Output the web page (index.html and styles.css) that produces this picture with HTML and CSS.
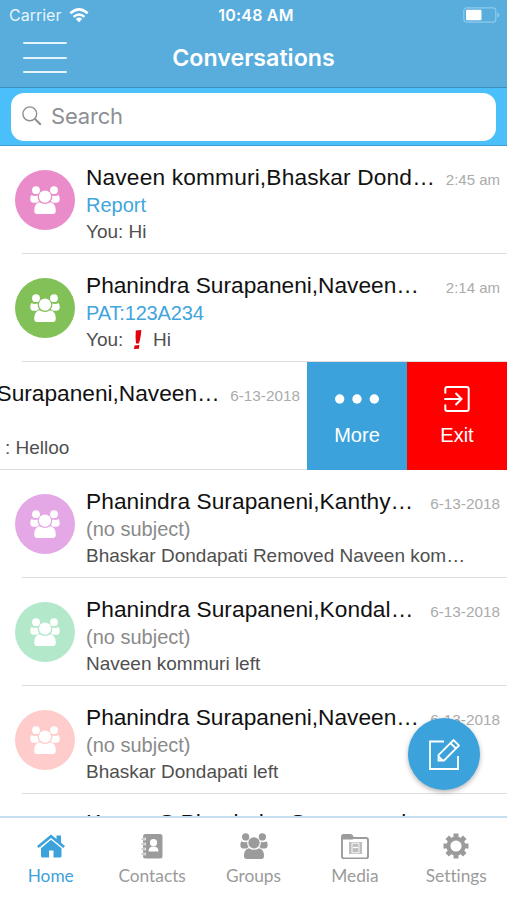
FILE: index.html
```html
<!DOCTYPE html>
<html lang="en">
<head>
    <meta charset="UTF-8">
    <meta name="viewport" content="width=device-width, initial-scale=1.0">
    <title>Conversations</title>
    <link rel="stylesheet" href="styles.css">
</head>
<body>

    <!-- Shared icon -->
    <svg class="sprite" aria-hidden="true">
        <symbol id="icon-group" viewBox="0 0 30 28">
            <circle cx="6" cy="4.200" r="3.900"/>
            <circle cx="24" cy="4.200" r="3.900"/>
            <path d="M1.500 9Q4 10.600 7.600 9.500Q7.400 13 9.200 15L7 16.800H3.500Q.300 16.800.300 13Q.300 10 1.500 9Z"/>
            <path d="M28.500 9Q26 10.600 22.400 9.500Q22.600 13 20.800 15L23 16.800H26.500Q29.700 16.800 29.700 13Q29.700 10 28.500 9Z"/>
            <circle cx="15" cy="10.600" r="6.100"/>
            <path d="M9.500 16.300Q15 19.700 20.500 16.300Q25.800 17.500 25.800 24.500Q25.800 28 22.800 28H7.200Q4.200 28 4.200 24.500Q4.200 17.500 9.500 16.300Z"/>
        </symbol>
    </svg>

    <div class="app">
        <!-- Header -->
        <header class="header">
            <div class="status-bar">
                <div class="carrier">
                    <span>Carrier</span>
                    <svg width="20" height="15" viewBox="0 0 20 15">
                        <g fill="none" stroke="#fff" stroke-width="2.500">
                            <path d="M1.300 5.300Q10-2.500 18.700 5.300"/>
                            <path d="M4.600 8.900Q10 4 15.400 8.900"/>
                        </g>
                        <path d="M6.800 10.900Q10 8.200 13.200 10.900L10 14.200Z" fill="#fff"/>
                    </svg>
                </div>
                <span class="clock">10:48 AM</span>
                <svg class="battery" width="37" height="16" viewBox="0 0 37 16">
                    <rect x=".8" y=".8" width="32" height="14.400" rx="3" fill="none" stroke="#8bcbed" stroke-width="1.200"/>
                    <rect x="3" y="2.800" width="15.500" height="10.400" rx="1" fill="#fff"/>
                    <path d="M34.300 5.300Q36.500 6 36.500 8T34.300 10.700Z" fill="#8bcbed"/>
                </svg>
            </div>
            <div class="nav-bar">
                <div class="menu-btn"><span></span><span></span><span></span></div>
                <h1>Conversations</h1>
            </div>
        </header>

        <!-- Search -->
        <div class="search-bar">
            <div class="search-field">
                <svg width="20" height="20" viewBox="0 0 20 20" fill="none" stroke="#8e8e93">
                    <circle cx="7.800" cy="7.800" r="6.900" stroke-width="1.400"/>
                    <path d="M12.800 12.800L18.800 18.800" stroke-width="2"/>
                </svg>
                <span>Search</span>
            </div>
        </div>

        <!-- Conversation list -->
        <main class="list">
            <div class="row">
                <div class="avatar pink"><svg><use href="#icon-group"/></svg></div>
                <div class="content">
                    <div class="top"><span class="name wide">Naveen kommuri,Bhaskar Dond…</span><span class="time">2:45 am</span></div>
                    <div class="subject link">Report</div>
                    <div class="preview">You: Hi</div>
                </div>
            </div>
            <div class="row">
                <div class="avatar green"><svg><use href="#icon-group"/></svg></div>
                <div class="content">
                    <div class="top"><span class="name">Phanindra Surapaneni,Naveen…</span><span class="time">2:14 am</span></div>
                    <div class="subject link pat">PAT:123A234</div>
                    <div class="preview">You: <svg class="alert" width="10" height="19" viewBox="0 0 10 19" fill="#e3000b"><path d="M2.800.5L8.300 0Q7.800 8.500 5.800 13.500H3Q2.200 7 2.800.500Z"/><path d="M1.500 15.500L6.300 15.100L6 18.700L1 19Z"/></svg> Hi</div>
                </div>
            </div>
            <div class="swipe">
                <div class="row swiped">
                    <div class="content">
                        <div class="top"><span class="name">Surapaneni,Naveen…</span><span class="time date">6-13-2018</span></div>
                        <div class="subject"></div>
                        <div class="preview sender">: Helloo</div>
                    </div>
                </div>
                <div class="action more">
                    <svg width="46" height="28" viewBox="0 0 46 28" fill="#fff">
                        <circle cx="5.700" cy="14" r="4.700"/>
                        <circle cx="23" cy="14" r="4.700"/>
                        <circle cx="40.300" cy="14" r="4.700"/>
                    </svg>
                    <span>More</span>
                </div>
                <div class="action exit">
                    <svg width="28" height="28" viewBox="0 0 28 28" fill="none" stroke="#fff" stroke-width="2">
                        <path d="M2.300 8.500V4Q2.300 2 4.300 2H23.700Q25.700 2 25.700 4V24Q25.700 26 23.700 26H4.300Q2.300 26 2.300 24V19.500"/>
                        <path d="M1.300 14H18.500M12.500 8L18.500 14L12.500 20"/>
                    </svg>
                    <span>Exit</span>
                </div>
            </div>
            <div class="row">
                <div class="avatar violet"><svg><use href="#icon-group"/></svg></div>
                <div class="content">
                    <div class="top"><span class="name kan">Phanindra Surapaneni,Kanthy…</span><span class="time date">6-13-2018</span></div>
                    <div class="subject">(no subject)</div>
                    <div class="preview">Bhaskar Dondapati Removed Naveen kom…</div>
                </div>
            </div>
            <div class="row">
                <div class="avatar mint"><svg><use href="#icon-group"/></svg></div>
                <div class="content">
                    <div class="top"><span class="name kan">Phanindra Surapaneni,Kondal…</span><span class="time date">6-13-2018</span></div>
                    <div class="subject">(no subject)</div>
                    <div class="preview">Naveen kommuri left</div>
                </div>
            </div>
            <div class="row">
                <div class="avatar rose"><svg><use href="#icon-group"/></svg></div>
                <div class="content">
                    <div class="top"><span class="name">Phanindra Surapaneni,Naveen…</span><span class="time date">6-13-2018</span></div>
                    <div class="subject">(no subject)</div>
                    <div class="preview">Bhaskar Dondapati left</div>
                </div>
            </div>
            <div class="row last">
                <div class="content">
                    <div class="top"><span class="name">Kumar S,Phanindra Surapaneni</span></div>
                </div>
            </div>
        </main>

        <!-- New message button -->
        <div class="compose">
            <svg width="32" height="32" viewBox="0 0 32 32" fill="none" stroke="#fff" stroke-width="1.800">
                <path d="M16 3.500H2V31H30V18"/>
                <path d="M10.500 22.500V17L25.500 2L31 7.500L16 22.500Z"/>
                <path d="M22.500 5L28 10.500M10.500 18.500L14.500 22.500"/>
            </svg>
        </div>

        <!-- Tab bar -->
        <nav class="tab-bar">
            <div class="tab active">
                <svg width="28" height="26" viewBox="0 0 28 26" fill="currentColor">
                    <path d="M0 13L14 1.500L19.500 6V2.500H24V9.800L28 13L26.300 15L14 5L1.700 15Z"/>
                    <path d="M14 6.800L24.500 15.300V23Q24.500 24.500 23 24.500H16.500V17.500H12V24.500H5.500Q4 24.500 4 23V15.300Z"/>
                </svg>
                <span>Home</span>
            </div>
            <div class="tab">
                <svg width="22" height="26" viewBox="0 0 22 26">
                    <rect x="2" y="1" width="19.500" height="24.500" rx="2.500" fill="currentColor"/>
                    <g fill="none" stroke="#fff" stroke-width="2.600"><path d="M0 6H5M0 11H5M0 16H5M0 21H5"/></g>
                    <g fill="none" stroke="currentColor" stroke-width="1.200"><path d="M.500 6H4.500M.500 11H4.500M.500 16H4.500M.500 21H4.500"/></g>
                    <circle cx="12.500" cy="9.700" r="3.600" fill="#fff"/>
                    <path d="M7.500 18.500Q7.500 13.500 12.500 13.500T17.500 18.500Z" fill="#fff"/>
                </svg>
                <span>Contacts</span>
            </div>
            <div class="tab">
                <svg width="28" height="26" fill="currentColor"><use href="#icon-group"/></svg>
                <span>Groups</span>
            </div>
            <div class="tab">
                <svg width="30" height="26" viewBox="0 0 30 26">
                    <path d="M2 7V3.500Q2 2 3.500 2H10.500Q12 2 13 5H26Q28 5 28 7V23.500Q28 25.500 26 25.500H4Q2 25.500 2 23.500Z" fill="none" stroke="currentColor" stroke-width="1.900"/>
                    <path d="M2 6.500V3H11.500L13 6.500Z" fill="currentColor"/>
                    <rect x="9" y="9" width="13" height="12" fill="currentColor" opacity=".65"/>
                    <rect x="12" y="10.200" width="7" height="9.600" fill="none" stroke="#fff" stroke-width=".9"/>
                    <path d="M13 14.500H18" stroke="#fff" stroke-width="1.200"/>
                </svg>
                <span>Media</span>
            </div>
            <div class="tab">
                <svg width="26" height="26" viewBox="-13 -13 26 26" fill="none" stroke="currentColor">
                    <circle r="7.600" stroke-width="4"/>
                    <g stroke-width="5" stroke-linecap="butt">
                        <path d="M0-8V-12.500M0 8V12.500M-8 0H-12.500M8 0H12.500"/>
                        <path d="M-6-6L-8.800-8.800M6-6L8.800-8.800M-6 6L-8.800 8.800M6 6L8.800 8.800"/>
                    </g>
                </svg>
                <span>Settings</span>
            </div>
        </nav>
    </div>
</body>
</html>
```
FILE: styles.css
```css
* {
    box-sizing: border-box;
}

body {
    font-family: "Liberation Sans", Arial, sans-serif;
    background: #fff;
    margin: 0;
}

.sprite {
    display: none;
}

svg {
    display: block;
    flex-shrink: 0;
}

.app {
    position: relative;
    display: flex;
    flex-direction: column;
    width: 507px;
    height: 900px;
    overflow: hidden;
}

/* Header */
.header {
    height: 88px;
    background: #58addd;
    border-bottom: 1px solid #3c8fbe;
    color: #fff;
    font-family: Inter, sans-serif;
}

.status-bar {
    display: grid;
    grid-template-columns: 1fr auto 1fr;
    align-items: center;
    height: 30px;
    padding: 0 7px 0 9px;
    font-size: 16px;
}

.carrier {
    display: flex;
    align-items: center;
    gap: 8px;
    color: #e6f4fc;
}

.clock {
    padding-left: 3px;
    font-weight: 600;
    letter-spacing: 0.200px;
}

.battery {
    justify-self: end;
}

.nav-bar {
    display: grid;
    grid-template-columns: 44px 1fr 44px;
    align-items: center;
    height: 55px;
    padding: 0 23px;
}

.menu-btn {
    display: flex;
    flex-direction: column;
    gap: 12.500px;
}

.menu-btn span {
    height: 2px;
    border-radius: 1px;
    background: #e3f4fd;
}

h1 {
    margin: 0;
    font-size: 23.200px;
    font-weight: 600;
    text-align: center;
}

/* Search */
.search-bar {
    height: 58px;
    padding: 5px 11px;
    background: #4abffa;
    border-bottom: 1px solid #3f9fd2;
}

.search-field {
    display: flex;
    align-items: center;
    gap: 9px;
    height: 48px;
    padding: 0 11px 2px;
    border-radius: 13px;
    background: #fff;
    color: #8e8e93;
    font-family: Inter, sans-serif;
    font-size: 22px;
    letter-spacing: -0.200px;
}

/* Conversations */
.list {
    height: 670px;
    overflow: hidden;
}

.row {
    display: flex;
    height: 108px;
    padding: 17px 7px 0 15px;
    gap: 11px;
    background: linear-gradient(#dedede, #dedede) 22px 100% / 100% 1.500px no-repeat;
}

.avatar {
    display: flex;
    align-items: center;
    justify-content: center;
    flex-shrink: 0;
    width: 60px;
    height: 60px;
    margin-top: 7px;
    border-radius: 50%;
    fill: #fff;
}

.avatar svg {
    width: 30px;
    height: 28px;
}

.pink { background: #ea8cc9; }
.green { background: #82c157; }
.violet { background: #e4a8e6; }
.mint { background: #b3e8cb; }
.rose { background: #ffcccc; }

.content {
    flex: 1;
    min-width: 0;
    white-space: nowrap;
}

.top {
    display: flex;
    align-items: baseline;
    justify-content: space-between;
    height: 29px;
    line-height: 28px;
}

.name {
    font-size: 22.700px;
    color: #111;
}

.wide {
    letter-spacing: 0.170px;
}

.kan {
    letter-spacing: 0.070px;
}

.time {
    font-size: 15px;
    color: #ababab;
}

.date {
    font-size: 15.300px;
}

.subject {
    height: 27px;
    line-height: 26px;
    font-size: 20px;
    color: #8a8a8a;
}

.link {
    color: #3fa5dc;
}

.pat {
    letter-spacing: -0.150px;
}

.preview {
    height: 26px;
    line-height: 26px;
    font-size: 19px;
    color: #4f4f4f;
}

.alert {
    display: inline-block;
    margin: 0 5px 0 4px;
    vertical-align: -3px;
}

.swipe {
    display: flex;
}

.swiped {
    flex: none;
    width: 307px;
    padding-left: 0;
    background-position: 0 100%;
}

.swiped .name {
    margin-left: -3.500px;
}

.sender {
    padding-left: 5px;
}

.action {
    display: flex;
    flex-direction: column;
    align-items: center;
    gap: 9px;
    width: 100px;
    height: 108px;
    padding-top: 23px;
    color: #fff;
    font-size: 20px;
    line-height: 26px;
}

.more {
    background: #3ba2db;
}

.exit {
    background: #fe0000;
}

.last {
    padding: 14px 0 0 86px;
}

.compose {
    position: absolute;
    right: 27px;
    bottom: 110px;
    display: flex;
    align-items: center;
    justify-content: center;
    width: 72px;
    height: 72px;
    border-radius: 50%;
    background: #3ba2db;
    box-shadow: 0 2px 5px rgba(0, 0, 0, 0.3);
}

/* Tab bar */
.tab-bar {
    display: flex;
    flex: 1;
    border-top: 2px solid #c3dff0;
    background: #fff;
}

.tab {
    display: flex;
    flex: 1;
    flex-direction: column;
    align-items: center;
    gap: 4px;
    padding-top: 15px;
    color: #9b9b9b;
    font-family: Lato, sans-serif;
    font-size: 17.300px;
    line-height: 25px;
    font-variant-ligatures: none;
}

.active {
    color: #3ba2db;
}
```
